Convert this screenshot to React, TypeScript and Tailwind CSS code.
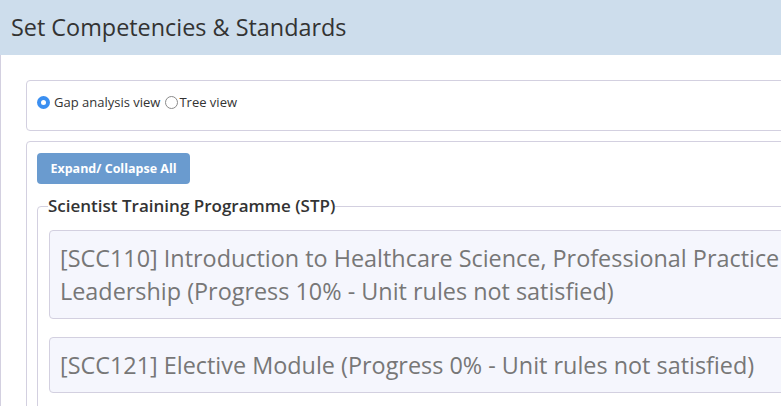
import React from 'react';

const modules = [
  '[SCC110] Introduction to Healthcare Science, Professional Practice and Leadership (Progress 10% - Unit rules not satisfied)',
  '[SCC121] Elective Module (Progress 0% - Unit rules not satisfied)',
];

export default function App() {
  return (
    <div className="w-[781px] h-[406px] overflow-hidden bg-white text-[#333] font-['Open_Sans',sans-serif]">
      {/* Header */}
      <div className="h-[55px] bg-[#cdddec] flex items-center pl-[11px]">
        <h1 className="text-[23.4px] leading-none">Set Competencies &amp; Standards</h1>
      </div>

      {/* Body */}
      <div className="border-l border-[#d3d0e0] w-[1000px] pl-[25px] pt-[25px] pb-4">
        {/* View switch */}
        <div className="border border-[#d3d0e0] rounded-[4px] h-[51px] flex items-start pt-[12px] pl-[10px]">
          <label className="flex items-center text-[13px]">
            <span className="w-[13px] h-[13px] rounded-full bg-[#3b8ff1] flex items-center justify-center">
              <span className="w-[5px] h-[5px] rounded-full bg-white" />
            </span>
            <span className="ml-[4px]">Gap analysis view</span>
          </label>
          <label className="flex items-center text-[13px] ml-[5px]">
            <span className="w-[13px] h-[13px] rounded-full border border-[#8a8a8a] bg-white" />
            <span className="ml-[1px]">Tree view</span>
          </label>
        </div>

        {/* Tree */}
        <div className="mt-[10px] border border-[#d3d0e0] rounded-[4px] pt-[11px] pl-[10px]">
          <button className="h-[31px] w-[153px] rounded-[4px] bg-[#6a9bcf] text-white text-[12.5px] font-bold pt-[2px]">
            Expand/ Collapse All
          </button>

          <fieldset className="mt-[11px] border border-[#d3d0e0] rounded-tl-[4px] pl-[11px] pr-0 pb-4 w-[960px]">
            <legend className="px-0 ml-[-1px] text-[17px] font-semibold leading-[22px]">
              Scientist Training Programme (STP)
            </legend>
            <div className="flex flex-col gap-[18px] mt-[13px]">
              {modules.map((m) => (
                <div
                  key={m}
                  className="w-[880px] border border-[#d3d0e0] rounded-[4px] bg-[#f5f6fd] px-[10px] pt-[11px] pb-[10px] text-[23.4px] leading-[33px] text-[#777]"
                >
                  {m}
                </div>
              ))}
            </div>
          </fieldset>
        </div>
      </div>
    </div>
  );
}
